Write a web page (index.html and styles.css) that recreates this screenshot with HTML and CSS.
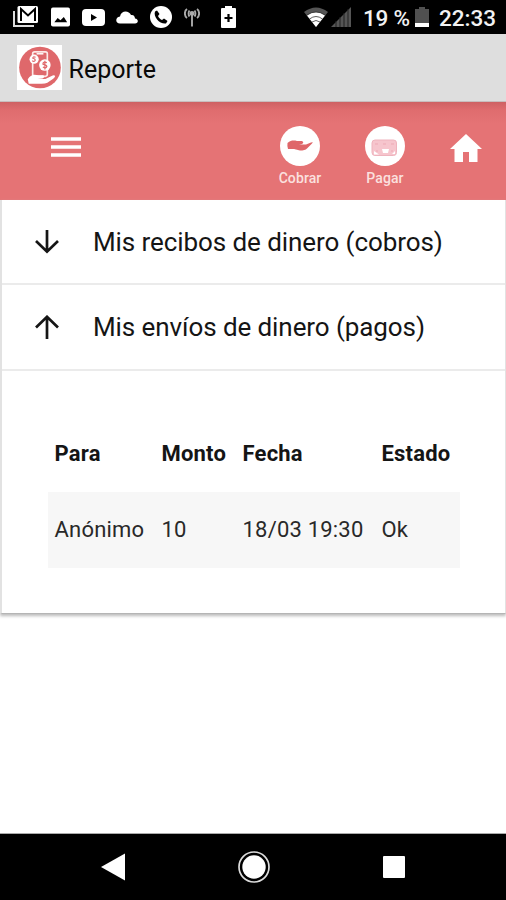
FILE: index.html
```html
<!DOCTYPE html>
<html lang="es">
<head>
<meta charset="utf-8">
<title>Reporte</title>
<link rel="stylesheet" href="styles.css">
</head>
<body>
<div class="screen">
  <div class="status">
    <div class="notifications">
      <svg width="26" height="22" viewBox="0 0 26 22"><path d="M1 5V20H21" fill="none" stroke="#ddd" stroke-width="2"/><rect x="4.500" y="0" width="20.500" height="17" rx="1.500" fill="#fff"/><path d="M8 15V3L15 9.500L22 3V15" fill="none" stroke="#000" stroke-width="2"/></svg>
      <svg width="19" height="20" viewBox="0 0 20 20"><rect width="20" height="20" rx="2" fill="#fff"/><path d="M3.500 15.500L7 11L10 13.500L13.500 10L17 15.500Z" fill="#000"/></svg>
      <svg width="23" height="17" viewBox="0 0 23 17"><rect width="23" height="17" rx="4" fill="#fff"/><path d="M9 5L15 8.500L9 12Z" fill="#000"/></svg>
      <svg width="22" height="13" viewBox="0 0 22 13"><path d="M4 12.500C-1 12.500-1 6 4 5.500C5-1 13-1 15 4C18 3.500 19 6 19 7.500C23 8 22.500 12.500 19 12.500Z" fill="#fff"/></svg>
      <svg width="22" height="22" viewBox="0 0 22 22"><circle cx="11" cy="11" r="11" fill="#fff"/><path d="M7 4.500L9.500 8L8 10C9 12 10.500 13.500 12 14L14 12.500L17.500 15L16 17.500C10 18.500 3 11 5 5.500Z" fill="#000"/></svg>
      <svg width="16" height="19" viewBox="0 0 16 19" fill="none" stroke="#aaa" stroke-width="1.900"><path d="M8 6V18.500M3 1C.2 3 .2 8 3 10M13 1C15.800 3 15.800 8 13 10M5.500 2.500C4.300 4 4.300 7 5.500 8.500M10.500 2.500C11.700 4 11.700 7 10.500 8.500"/><circle cx="8" cy="5.500" r="1.500" fill="#bbb"/></svg>
      <svg width="15" height="22" viewBox="0 0 15 22"><path d="M1 2H4V0H11V2H14Q15 2 15 3V21Q15 22 14 22H1Q0 22 0 21V3Q0 2 1 2Z" fill="#fff"/><path d="M7.500 8V16M3.500 12H11.500" stroke="#000" stroke-width="2.200"/></svg>
    </div>
    <div class="system">
      <svg width="24" height="20" viewBox="0 0 24 20"><path d="M0 5Q12-4 24 5L12 20Z" fill="#555"/><path d="M3 8.500Q12 2 21 8.500L12 20Z" fill="#fff"/><path d="M2.500 8.300Q12 1.500 21.500 8.300M5.500 12Q12 7 18.500 12M8 15Q12 12 16 15" fill="none" stroke="#333" stroke-width=".8"/></svg>
      <svg class="signal" width="20" height="20" viewBox="0 0 20 20"><path d="M0 20L20 0V20Z" fill="#555"/><path d="M5 14V20M9 10V20M13 6V20M17 2V20" stroke="#222"/></svg>
      <span class="percent">19 %</span>
      <svg class="level" width="14" height="20" viewBox="0 0 14 20"><path d="M0 2H4V0H10V2H14V16H0Z" fill="#505050"/><path d="M0 16H14V20H0Z" fill="#fff"/></svg>
      <span class="clock">22:33</span>
    </div>
  </div>

  <header class="titlebar">
    <svg class="logo" width="45" height="45" viewBox="0 0 46 46"><path d="M0 0H46V46H0Z" fill="#fff"/><circle cx="23.500" cy="23" r="21.300" fill="#df686b"/><rect x="16" y="7" width="15" height="25" rx="2" fill="none" stroke="#fbe9e7" stroke-width="1.700"/><path d="M20 9H27" stroke="#fff" stroke-width="1.500"/><circle cx="17.500" cy="14.500" r="4.700" fill="#fff"/><circle cx="28.500" cy="20.500" r="5.900" fill="#fff"/><path d="M19 12.500Q16 11.500 16.200 13.500Q19 14 18.500 16Q17 17.500 15.500 16M30.500 18Q26.500 16.500 26.500 19.500Q30.500 20.500 30.500 22Q29.500 24.500 26.500 22.500M28.500 16V25" fill="none" stroke="#df686b" stroke-width="1.200"/><path d="M11 35C15 28.500 19 30.500 22 31H27Q29 33 26 34.200L21 34.700H29L37 31Q41 31 37 34.500L31 38.500Q29 39.500 25 39.500H12Z" fill="#fff"/></svg>
    <h1>Reporte</h1>
  </header>

  <nav class="toolbar">
    <svg class="menu" width="30" height="20" viewBox="0 0 30 20"><path d="M0 2H30M0 10H30M0 18H30" stroke="#fff" stroke-width="3.600"/></svg>
    <div class="action cobrar">
      <svg width="40" height="40" viewBox="0 0 40 40"><circle cx="20" cy="20" r="20" fill="#fff"/><path d="M7.500 17C11 14 14 14.500 17 15H22Q24.500 16.500 22 18L19 18.500H26L31 16.500Q34 15.500 32 17.500L27 22.500Q25 24.500 20 24.500L14 23H8Q7 20 7.500 17Z" fill="#df6669"/></svg>
      <span>Cobrar</span>
    </div>
    <div class="action pagar">
      <svg width="40" height="40" viewBox="0 0 40 40"><circle cx="20" cy="20" r="20" fill="#fff"/><rect x="7" y="14" width="24.500" height="15.500" rx="3" fill="#f6c5cd" stroke="#eeb3bd"/><path d="M10 18H13M18 18H21M26 18H29M12 26V24M27 26V24" stroke="#eda9b5"/><path d="M17 23H24L23 27H18ZM9 25L14 28.500H9ZM27 28L30 25V28Z" fill="#fff"/></svg>
      <span>Pagar</span>
    </div>
    <svg class="home" width="32" height="29" viewBox="0 0 32 29"><path d="M16 0L0 15H4.500V28H13V18H19V28H27.500V15H32Z" fill="#fff"/></svg>
  </nav>

  <main class="card">
    <div class="row first">
      <svg width="24" height="24" viewBox="0 0 24 24"><path d="M12 0V22M1 11L12 21.700L23 11" fill="none" stroke="#151515" stroke-width="2.700"/></svg>
      <span>Mis recibos de dinero (cobros)</span>
    </div>
    <div class="row second">
      <svg width="24" height="24" viewBox="0 0 24 24"><path d="M12 24V2M1 12.500L12 1.800L23 12.500" fill="none" stroke="#151515" stroke-width="2.700"/></svg>
      <span>Mis envíos de dinero (pagos)</span>
    </div>
    <div class="detail">
      <table>
        <thead><tr><th>Para</th><th>Monto</th><th>Fecha</th><th>Estado</th></tr></thead>
        <tbody><tr><td>Anónimo</td><td>10</td><td>18/03 19:30</td><td>Ok</td></tr></tbody>
      </table>
    </div>
  </main>

  <footer class="navbar">
    <svg width="25" height="28" viewBox="0 0 25 28"><path d="M0 14L24 0.500V27.500Z" fill="#fff"/></svg>
    <svg class="circle" width="32" height="32" viewBox="0 0 32 32"><circle cx="16" cy="16" r="15" fill="none" stroke="#ddd" stroke-width="1.700"/><circle cx="16" cy="16" r="11.700" fill="#fff"/></svg>
    <svg class="square" width="22" height="22" viewBox="0 0 22 22"><rect width="22" height="22" rx="1" fill="#fff"/></svg>
  </footer>
</div>
</body>
</html>
```
FILE: styles.css
```css
* { box-sizing: border-box; }
body { margin: 0; background: #fff; font-family: Roboto, sans-serif; color: #151515; }
svg { display: block; flex: none; }
.screen { width: 506px; height: 900px; display: flex; flex-direction: column; overflow: hidden; }
.status { height: 34px; flex: none; background: #000; display: flex; align-items: center; justify-content: space-between; padding: 0 11px 0 13px; }
.notifications { display: flex; align-items: center; gap: 11.8px; }
.notifications svg:last-child { margin-left: 9px; }
.system { display: flex; align-items: center; color: #f2f2f2; font-size: 22.5px; font-weight: 500; line-height: 34px; white-space: nowrap; }
.system span { padding-top: 2px; }
.signal { margin-left: 3px; }
.percent { width: 47px; margin-left: 12px; letter-spacing: -0.2px; }
.level { margin-left: 5px; }
.clock { width: 56px; margin-left: 10px; }
.titlebar { height: 68px; flex: none; background: #dedede; border-bottom: 1px solid #c8bebe; display: flex; align-items: center; padding-left: 17px; }
h1 { margin: 4px 0 0 6.5px; font-size: 25px; font-weight: 400; color: #090909; line-height: 32px; }
.toolbar { height: 98px; flex: none; background: linear-gradient(#ce6163 0, #df6c6e 8px, #e57375 22px); display: flex; align-items: flex-start; padding-left: 51px; }
.menu { margin-top: 35px; }
.action { width: 60px; margin-top: 24px; display: flex; flex-direction: column; align-items: center; }
.action span { font: 500 14px/18px Roboto, sans-serif; color: #fbe0df; margin-top: 3px; letter-spacing: 0.1px; }
.cobrar { margin-left: 189px; }
.pagar { margin-left: 25px; }
.home { margin: 32px 0 0 35px; }
.card { height: 414px; flex: none; background: #fff; border-left: 2px solid #e2e2e2; border-right: 1px solid #e2e2e2; border-bottom: 1px solid #b5b5b5; box-shadow: 0 2px 3px #bbb; }
.row { display: flex; align-items: center; padding-left: 33px; border-bottom: 2px solid #ebebeb; font-size: 26px; letter-spacing: -0.08px; }
.row span { margin-left: 34px; white-space: nowrap; }
.first { height: 85px; }
.second { height: 86px; }
.detail { padding: 45px 0 0 46px; }
table { width: 412px; table-layout: fixed; border-collapse: collapse; font-size: 22px; text-align: left; letter-spacing: 0.2px; }
th, td { height: 76px; padding: 0 0 2px 6.5px; white-space: nowrap; }
th { font-weight: 700; width: 107px; }
th:nth-child(2) { width: 81px; }
th:nth-child(3) { width: 139px; }
th:nth-child(4) { width: 85px; }
td { background: #f7f7f7; color: #292929; }
.navbar { height: 67px; flex: none; margin-top: auto; background: #000; border-top: 1px solid #aaa; display: flex; align-items: center; padding: 0 101px; }
.circle { margin-left: 111.5px; }
.square { margin-left: 113.5px; }
```
